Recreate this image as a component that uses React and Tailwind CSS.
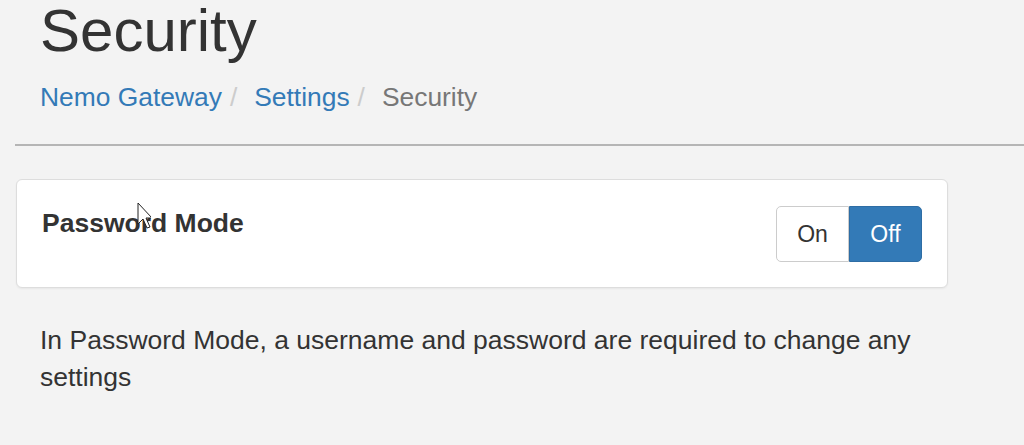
export default function App() {
  return (
    <div className="relative h-[445px] w-[1024px] overflow-hidden bg-[#f3f3f3] text-[#333] font-['Liberation_Sans',Arial,sans-serif]">
      <div className="pl-[40px] pt-0">
        <h1 className="text-[60px] leading-[66px] -mt-[2px]">Security</h1>
        <nav className="mt-[18px] flex items-center text-[26.4px] leading-[30px]">
          <a className="text-[#337ab7]">Nemo Gateway</a>
          <span className="pl-[8px] pr-[17px] text-[#ccc]">/</span>
          <a className="text-[#337ab7]">Settings</a>
          <span className="pl-[8px] pr-[17px] text-[#ccc]">/</span>
          <span className="text-[#777]">Security</span>
        </nav>
      </div>
      <hr className="ml-[15px] mt-[32px] border-t-[2px] border-[#b5b5b5]" />
      <div className="ml-[16px] mt-[33px] flex h-[109px] w-[932px] items-start justify-between rounded-[6px] border border-[#ddd] bg-white pl-[25px] pr-[25px] pt-[26px] shadow-[0_1px_2px_rgba(0,0,0,0.05)]">
        <h2 className="mt-[2px] text-[26.5px] font-bold leading-[30px]">Password Mode</h2>
        <div className="flex h-[56px] text-[23px]">
          <button className="w-[73px] rounded-l-[5px] border border-[#ccc] bg-white text-[#333]">On</button>
          <button className="w-[73px] rounded-r-[5px] border border-[#2e6da4] bg-[#337ab7] text-white">Off</button>
        </div>
      </div>
      <p className="ml-[40px] mt-[34px] w-[907px] text-[26.5px] leading-[37px]">
        In Password Mode, a username and password are required to change any settings
      </p>
      <svg className="absolute left-[137px] top-[202px]" width="14" height="30" viewBox="0 0 14 30">
        <path d="M1 1 L1 22 L6 17 L10 26 L13 25 L9 16 L15 16 Z" fill="white" stroke="#222" strokeWidth="1" />
      </svg>
    </div>
  );
}
